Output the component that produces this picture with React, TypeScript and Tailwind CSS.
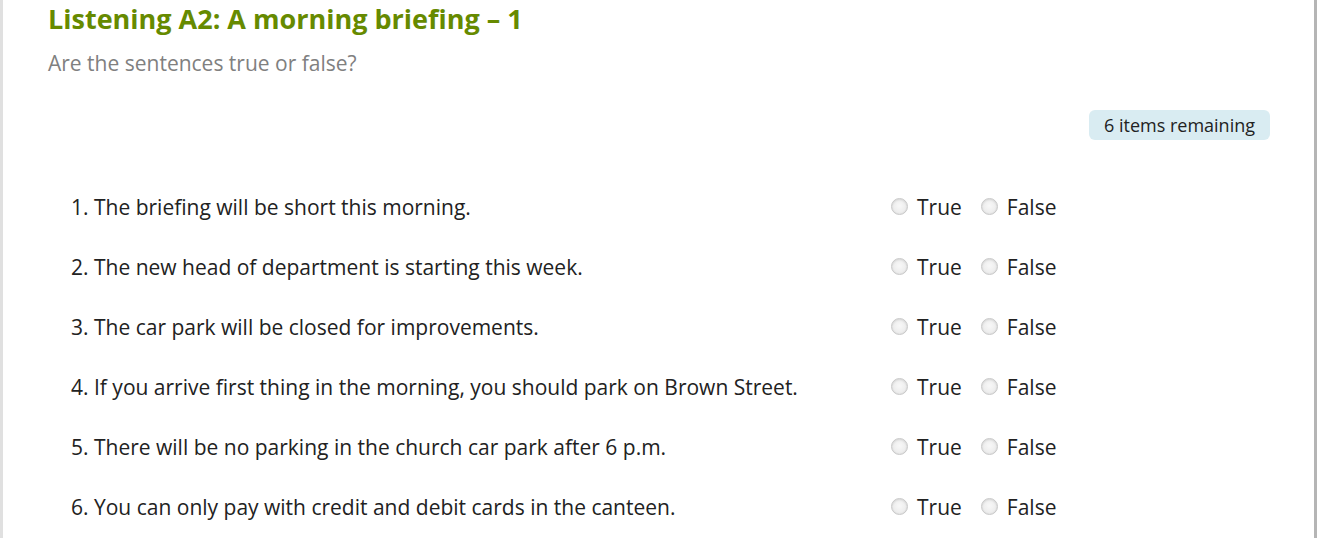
const items = [
  "1. The briefing will be short this morning.",
  "2. The new head of department is starting this week.",
  "3. The car park will be closed for improvements.",
  "4. If you arrive first thing in the morning, you should park on Brown Street.",
  "5. There will be no parking in the church car park after 6 p.m.",
  "6. You can only pay with credit and debit cards in the canteen.",
];

function Radio() {
  return (
    <span className="inline-block w-[17px] h-[17px] rounded-full border border-[#c8c8c8] bg-[radial-gradient(circle_at_50%_45%,#f8f8f8_0%,#eeeeee_55%,#d9d9d9_100%)] shadow-[inset_0_1px_2px_rgba(0,0,0,0.1)] -mt-[3px]" />
  );
}

export default function App() {
  return (
    <div className="w-[1318px] h-[538px] bg-white flex font-['Open_Sans',sans-serif] overflow-hidden">
      <div className="w-[3px] bg-[#e0e0e0] shrink-0" />
      <main className="flex-1 pl-[45px] pr-[44px]">
        <h1 className="text-[27px] leading-[36px] font-bold text-[#668a00] mt-[1px]">
          Listening A2: A morning briefing – 1
        </h1>
        <p className="text-[21px] leading-[28px] text-[#808080] mt-[12px]">
          Are the sentences true or false?
        </p>
        <div className="flex justify-end mt-[33px]">
          <span className="bg-[#d9ecf2] rounded-[6px] px-[15px] h-[30px] flex items-center text-[18px] text-[#222]">
            6 items remaining
          </span>
        </div>
        <ul className="mt-[38px] pl-[23px]">
          {items.map((t) => (
            <li key={t} className="flex items-center h-[60px] text-[21px] text-[#222]">
              <span className="w-[820px]">{t}</span>
              <label className="flex items-center gap-[9px]">
                <Radio />
                <span>True</span>
              </label>
              <label className="flex items-center gap-[9px] ml-[19px]">
                <Radio />
                <span>False</span>
              </label>
            </li>
          ))}
        </ul>
      </main>
      <div className="w-[3px] bg-[#b5b5b5] shrink-0" />
      <div className="w-[1px] bg-white shrink-0" />
    </div>
  );
}
